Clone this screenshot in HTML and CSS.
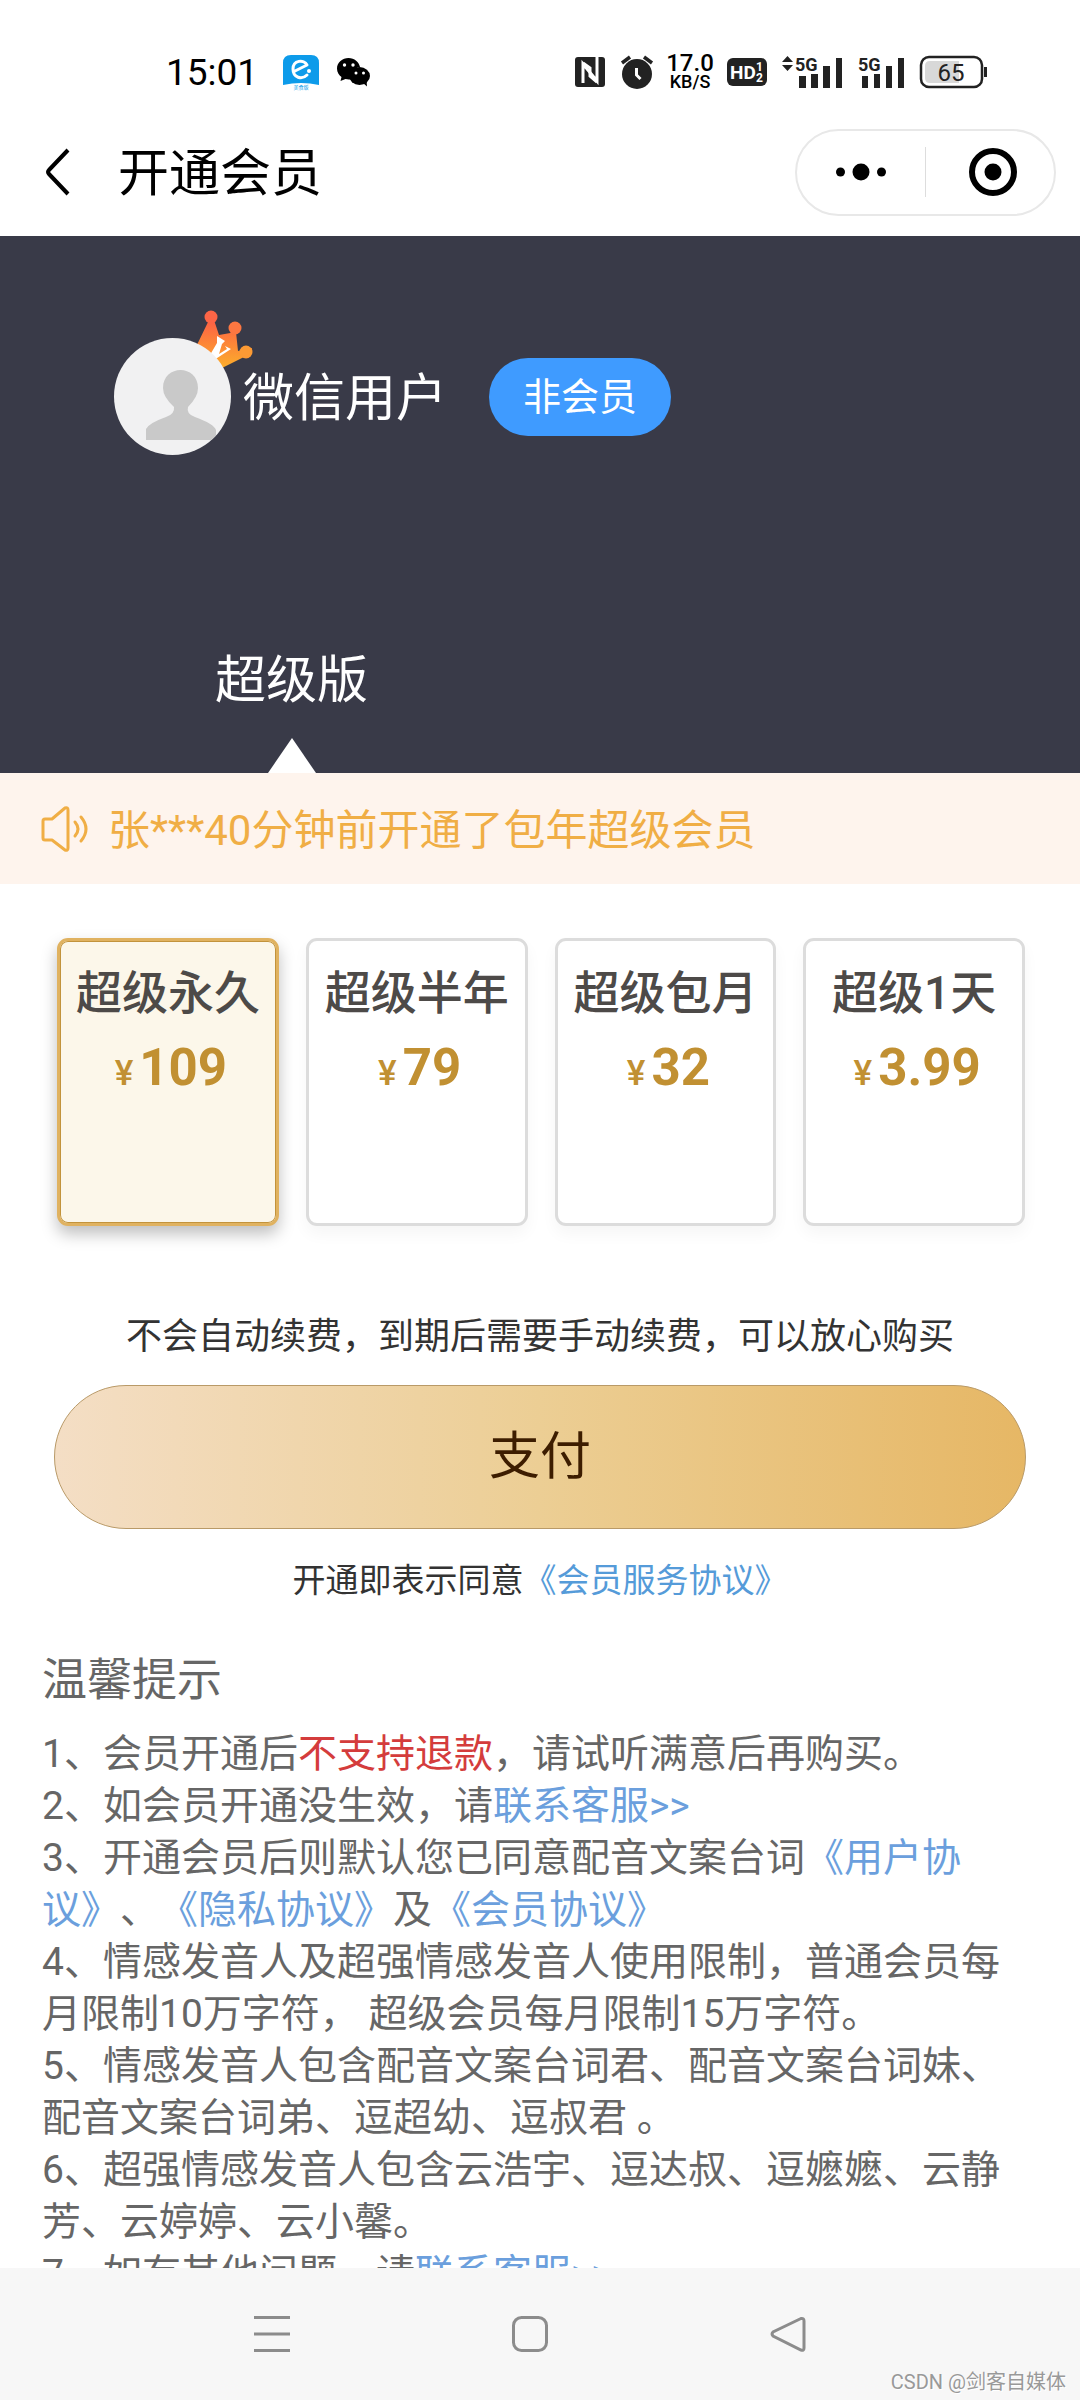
FILE: index.html
```html
<!DOCTYPE html>
<html lang="zh-CN">
<head>
<meta charset="utf-8">
<meta name="viewport" content="width=device-width, initial-scale=1">
<title>开通会员</title>
<link rel="stylesheet" href="styles.css">
</head>
<body>
<div class="screen">
  <div class="status-bar">
    <div class="status-left">
      <span class="clock">15:01</span>
      <svg class="app-icon" width="36" height="36" viewBox="0 0 36 36" aria-hidden="true">
        <path d="M8 1h20q8 0 8 8v22q-18-4-36 0V9q0-8 8-8z" fill="#0d9bea"/>
        <path d="M12 17l12-6c-3-6-14-5-14 4 0 9 9 11 14 6" fill="none" stroke="#fff" stroke-width="3" stroke-linecap="round" stroke-linejoin="round"/>
        <circle cx="26" cy="17" r="2" fill="#fff"/>
        <text x="18" y="35" font-size="5" text-anchor="middle" fill="#0d9bea">美食版</text>
      </svg>
      <svg class="chat-icon" width="33" height="30" viewBox="0 0 33 30" aria-hidden="true">
        <path d="M11.500 1C5.500 1 0 5.500 0 11.500c0 4 2 6.500 4.500 8.500L3.500 24l5-2c2 .5 4 .5 6 .2A10 10 0 0 1 23 10C22 5 17.500 1 11.500 1z" fill="#000"/>
        <ellipse cx="22.500" cy="19" rx="10.500" ry="9" fill="#000"/>
        <path d="M26 26l4 3.500-.5-6z" fill="#000"/>
        <circle cx="7.500" cy="8" r="1.700" fill="#fff"/><circle cx="16" cy="8" r="1.700" fill="#fff"/>
        <circle cx="19" cy="16" r="1.500" fill="#fff"/><circle cx="26.500" cy="16" r="1.500" fill="#fff"/>
      </svg>
    </div>
    <div class="status-right">
      <svg width="30" height="32" viewBox="0 0 30 32" aria-hidden="true">
        <rect y="1" width="30" height="30" rx="3" fill="#222"/>
        <path d="M8 27V8l14 17V1" fill="none" stroke="#fff" stroke-width="3"/>
        <path d="M8 7l7 5v5M22 26l-7-6v-4" fill="none" stroke="#fff" stroke-width="3"/>
      </svg>
      <svg width="32" height="34" viewBox="0 0 32 34" aria-hidden="true">
        <circle cx="16" cy="19" r="15" fill="#222"/>
        <path d="M1 8l8-6M31 8l-8-6" stroke="#222" stroke-width="3.500"/>
        <path d="M15.500 13v7l4 4" fill="none" stroke="#fff" stroke-width="3"/>
      </svg>
      <div class="net-speed"><b>17.0</b><span>KB/S</span></div>
      <svg width="40" height="30" viewBox="0 0 40 30" aria-hidden="true">
        <rect y="1" width="40" height="28" rx="6" fill="#222"/>
        <g fill="#fff" font-weight="700"><text x="3" y="22" font-size="19">HD</text><text x="29" y="14" font-size="12">1</text><text x="29" y="25" font-size="12">2</text></g>
      </svg>
      <svg width="61" height="34" viewBox="0 0 61 34" aria-hidden="true">
        <path d="M0 7l5.500-6L11 7zM0 10l5.500 6L11 10z" fill="#222"/>
        <text x="13" y="16" font-size="18" font-weight="700" fill="#222">5G</text>
        <path d="M17 21h7v12h-7zM29 19h7v14h-7zM41 11h7v22h-7zM54 3h6v30h-6z" fill="#222"/>
      </svg>
      <svg width="47" height="34" viewBox="0 0 47 34" aria-hidden="true">
        <text x="0" y="16" font-size="18" font-weight="700" fill="#222">5G</text>
        <path d="M4 21h6v12H4zM16 19h6v14h-6zM28 11h6v22h-6zM40 3h6v30h-6z" fill="#222"/>
      </svg>
      <svg width="68" height="34" viewBox="0 0 68 34" aria-hidden="true">
        <rect x="1" y="2" width="61" height="30" rx="8" fill="#fff" stroke="#222" stroke-width="2.500"/>
        <path d="M10 6h29v22H10q-5 0-5-5V11q0-5 5-5z" fill="#d8d8d8"/>
        <path d="M65.500 12v10" stroke="#222" stroke-width="3"/>
        <text x="31" y="26" font-size="24" text-anchor="middle" fill="#222">65</text>
      </svg>
    </div>
  </div>

  <header class="nav-bar">
    <button class="back" type="button" aria-label="返回">
      <svg width="24" height="48" viewBox="0 0 24 48"><path d="M22 2L3 22q-2 2 0 4l19 20" fill="none" stroke="#000" stroke-width="4"/></svg>
    </button>
    <h1 class="nav-title">开通会员</h1>
    <div class="capsule">
      <button type="button" aria-label="更多">
        <svg width="52" height="18" viewBox="0 0 52 18"><circle cx="5.500" cy="9" r="4.500"/><circle cx="26" cy="9" r="8.500"/><circle cx="46.500" cy="9" r="4.500"/></svg>
      </button>
      <span class="capsule-line"></span>
      <button type="button" aria-label="关闭">
        <svg width="50" height="50" viewBox="0 0 50 50"><circle cx="25" cy="25" r="21" fill="none" stroke="#000" stroke-width="6"/><circle cx="25" cy="25" r="8.500"/></svg>
      </button>
    </div>
  </header>

  <main class="content">
    <section class="hero">
      <div class="user">
        <div class="avatar">
          <svg class="crown" width="60" height="60" viewBox="0 0 60 60" aria-hidden="true">
            <defs><linearGradient id="crown-fill" x1="0" y1="0" x2="0" y2="1"><stop offset="0" stop-color="#fd5f45"/><stop offset="1" stop-color="#fcb02a"/></linearGradient></defs>
            <g fill="url(#crown-fill)">
              <path d="M0 40L14 11h5l5 15 17-3 2 19 14-3v5L25 60z"/>
            </g>
            <path d="M15 13h3l1 4z" fill="#fd6546"/>
            <circle cx="16" cy="8" r="6.500" fill="#fd6546"/>
            <circle cx="40" cy="19" r="6.500" fill="#fd7741"/>
            <circle cx="51" cy="43" r="6.500" fill="#fc9a34"/>
            <path d="M22 27l8 5-3 3-3 10 8-5-2-3 6 3-20 13-4-2 10-17z" fill="#fff"/>
          </svg>
          <svg class="face" width="117" height="117" viewBox="0 0 117 117" aria-hidden="true">
            <defs><clipPath id="face-clip"><circle cx="58.500" cy="58.500" r="58.500"/></clipPath></defs>
            <g clip-path="url(#face-clip)">
              <rect width="117" height="117" fill="#f1f1f2"/>
              <path d="M32 102V91q3-6 20-12 9-3 8-10-11-10-11-19c0-24 35-24 35 0q0 9-10 19-2 7 7 10 19 7 21 13v10z" fill="#c9c9c9"/>
            </g>
          </svg>
        </div>
        <span class="user-name">微信用户</span>
        <span class="badge">非会员</span>
      </div>
      <div class="edition"><span>超级版</span><i class="pointer"></i></div>
    </section>

    <div class="notice">
      <svg width="47" height="46" viewBox="0 0 47 46" aria-hidden="true">
        <g fill="none" stroke="#f0ae45" stroke-width="3" stroke-linejoin="round" stroke-linecap="round">
          <path d="M2 15q0-2 2-2h7L24 2q3-1 3 2v38q0 3-3 2L11 34H4q-2 0-2-2z"/>
          <path d="M34 16q6 7 0 14M40 11q10 12 0 24"/>
        </g>
      </svg>
      <span class="notice-text">张***40分钟前开通了包年超级会员</span>
    </div>

    <form class="purchase">
      <div class="plans">
        <label class="plan"><input type="radio" name="plan" checked><span class="plan-name">超级永久</span><span class="price"><small>¥</small>109</span></label>
        <label class="plan"><input type="radio" name="plan"><span class="plan-name">超级半年</span><span class="price"><small>¥</small>79</span></label>
        <label class="plan"><input type="radio" name="plan"><span class="plan-name">超级包月</span><span class="price"><small>¥</small>32</span></label>
        <label class="plan"><input type="radio" name="plan"><span class="plan-name">超级1天</span><span class="price"><small>¥</small>3.99</span></label>
      </div>
      <p class="renewal">不会自动续费，到期后需要手动续费，可以放心购买</p>
      <button class="pay" type="button">支付</button>
      <p class="agreement">开通即表示同意<a href="#">《会员服务协议》</a></p>
    </form>

    <section class="tips">
      <h2>温馨提示</h2>
      <p>1、会员开通后<em>不支持退款</em>，请试听满意后再购买。</p>
      <p>2、如会员开通没生效，请<a href="#">联系客服&gt;&gt;</a></p>
      <p>3、开通会员后则默认您已同意配音文案台词<a href="#">《用户协议》</a>、<a href="#">《隐私协议》</a>及<a href="#">《会员协议》</a></p>
      <p>4、情感发音人及超强情感发音人使用限制，普通会员每月限制10万字符， 超级会员每月限制15万字符。</p>
      <p>5、情感发音人包含配音文案台词君、配音文案台词妹、配音文案台词弟、逗超幼、逗叔君 。</p>
      <p>6、超强情感发音人包含云浩宇、逗达叔、逗嬷嬷、云静芳、云婷婷、云小馨。</p>
      <p>7、如有其他问题，请<a href="#">联系客服&gt;&gt;</a></p>
    </section>
  </main>

  <nav class="system-nav">
    <button type="button" aria-label="最近任务"><svg width="36" height="36" viewBox="0 0 36 36"><path d="M0 1.500h36M0 18h36M0 34.500h36" stroke="#8c8c8c" stroke-width="3"/></svg></button>
    <button type="button" aria-label="主屏幕"><svg width="36" height="36" viewBox="0 0 36 36"><rect x="1.500" y="1.500" width="33" height="33" rx="8" fill="none" stroke="#8c8c8c" stroke-width="3"/></svg></button>
    <button type="button" aria-label="返回"><svg width="36" height="36" viewBox="0 0 36 36"><path d="M31 2.500L3 16q-2 2 0 4l28 14q3 1 3-2V5q0-3-3-2.500z" fill="none" stroke="#8c8c8c" stroke-width="3"/></svg></button>
    <span class="watermark">CSDN @剑客自媒体</span>
  </nav>
</div>
</body>
</html>
```
FILE: styles.css
```css
* { box-sizing: border-box; }

body, h1, h2, p { margin: 0; font-weight: 400; }

body {
  background: #fff;
  color: #333;
  font-family: Roboto, "Noto Sans CJK SC", sans-serif;
  text-spacing-trim: space-all;
}

button {
  border: 0;
  padding: 0;
  background: none;
  font: inherit;
  color: inherit;
}

svg { display: block; flex: none; overflow: visible; }
a { color: #6b9fdd; text-decoration: none; }

.screen {
  display: flex;
  flex-direction: column;
  height: 100vh;
}

/* Phone status bar */
.status-bar {
  display: flex;
  justify-content: space-between;
  align-items: center;
  height: 108px;
  padding: 36px 92px 0 166px;
  flex: none;
}
.status-left, .status-right { display: flex; align-items: center; }
.status-right { gap: 16px; }
.status-right svg:nth-child(n + 5) { margin-left: -1px; }
.clock { padding-top: 2px; font-size: 37px; line-height: 40px; color: #000; }
.app-icon { margin-left: 25px; }
.chat-icon { margin-left: 18px; }
.net-speed {
  display: flex;
  flex-direction: column;
  align-items: center;
  width: 42px;
  color: #000;
  font-size: 18px;
  line-height: 18px;
  font-weight: 500;
}
.net-speed b { font-size: 24px; line-height: 20px; font-weight: 500; }

/* Mini program title bar */
.nav-bar {
  display: flex;
  align-items: center;
  height: 128px;
  padding: 0 24px 0 46px;
  flex: none;
}
.nav-title {
  flex: 1;
  margin-left: 48px;
  padding-top: 4px;
  font-size: 51px;
  line-height: 60px;
  color: #000;
}
.capsule {
  display: grid;
  grid-template-columns: 1fr 1px 1fr;
  align-items: center;
  width: 261px;
  height: 87px;
  border: 2px solid #e8e8e8;
  border-radius: 44px;
}
.capsule button { display: flex; justify-content: center; }
.capsule button:last-child { padding-left: 6px; }
.capsule-line { height: 50px; background: #ddd; }

/* Scrolling page */
.content {
  flex: 1;
  min-height: 0;
  overflow: auto;
  scrollbar-width: none;
}

.hero {
  display: flex;
  flex-direction: column;
  align-items: flex-start;
  height: 537px;
  padding-top: 102px;
  background: #393a48;
  color: #fff;
}
.user { display: flex; align-items: center; padding-left: 114px; }
.avatar { position: relative; }
.face { position: relative; }
.crown { position: absolute; left: 81px; top: -29px; }
.user-name { margin-left: 12px; padding-top: 4px; font-size: 51px; line-height: 60px; }
.badge {
  margin-left: 42px;
  padding: 0 34px;
  border-radius: 39px;
  background: #3f9bff;
  font-size: 38px;
  line-height: 78px;
}
.edition {
  display: flex;
  flex-direction: column;
  align-items: center;
  margin: auto 0 0 215px;
  font-size: 51px;
  line-height: 60px;
}
.pointer {
  margin-top: 27px;
  border: 24px solid transparent;
  border-top: 0;
  border-bottom: 35px solid #fff;
}

.notice {
  display: flex;
  align-items: center;
  gap: 20px;
  height: 111px;
  padding-left: 41px;
  background: #fef4ed;
  color: #f0ae45;
  font-size: 42px;
  line-height: 50px;
}
.notice-text { padding-top: 4px; }

.purchase { padding: 54px 54px 0; }
.plans {
  display: grid;
  grid-template-columns: repeat(4, 1fr);
  gap: 27px;
  padding: 0 1px 0 3px;
}
.plan {
  position: relative;
  display: flex;
  flex-direction: column;
  align-items: center;
  height: 288px;
  padding-top: 22px;
  border: 3px solid #dcdcdc;
  border-radius: 11px;
  background: #fff;
  box-shadow: 0 8px 16px rgba(0, 0, 0, .04);
}
.plan input {
  position: absolute;
  inset: 0;
  width: 100%;
  height: 100%;
  margin: 0;
  opacity: 0;
}
.plan:has(input:checked) {
  border-color: #e0b260;
  background: #fcf7ea;
  box-shadow: inset 0 0 0 1px #c2933c, 0 8px 16px rgba(0, 0, 0, .25);
}
.plan-name { font-size: 46px; line-height: 60px; font-weight: 500; color: #4d4a48; white-space: nowrap; }
.price {
  display: flex;
  align-items: baseline;
  gap: 6px;
  margin-top: 15px;
  padding-left: 6px;
  font-size: 51px;
  line-height: 60px;
  font-weight: 700;
  color: #c19032;
}
.price small { font-size: 35px; font-weight: 500; }

.renewal {
  margin-top: 86px;
  font-size: 36px;
  line-height: 50px;
  text-align: center;
}
.pay {
  display: block;
  width: 100%;
  height: 144px;
  margin-top: 23px;
  border: 1px solid #b99a68;
  border-radius: 72px;
  background: linear-gradient(90deg, #f4dec5, #ecce94 50%, #e6b765);
  color: #3d1d00;
  font-size: 51px;
  line-height: 60px;
}
.agreement {
  margin-top: 27px;
  font-size: 33px;
  line-height: 50px;
  text-align: center;
}
.agreement a { color: #559bd9; }

.tips {
  padding: 45px 60px 40px 42px;
  color: #666;
  font-size: 39px;
  line-height: 52px;
}
.tips h2 { margin-bottom: 17px; font-size: 45px; line-height: 60px; }
.tips em { font-style: normal; color: #d43c3c; }

/* Android navigation keys */
.system-nav {
  position: relative;
  display: flex;
  justify-content: center;
  align-items: center;
  gap: 222px;
  height: 132px;
  padding-right: 20px;
  background: #f7f7f7;
  flex: none;
}
.watermark {
  position: absolute;
  right: 14px;
  bottom: 5px;
  color: #999;
  font-size: 20px;
  line-height: 26px;
  text-shadow: 1px 1px 0 #fff;
}
```
